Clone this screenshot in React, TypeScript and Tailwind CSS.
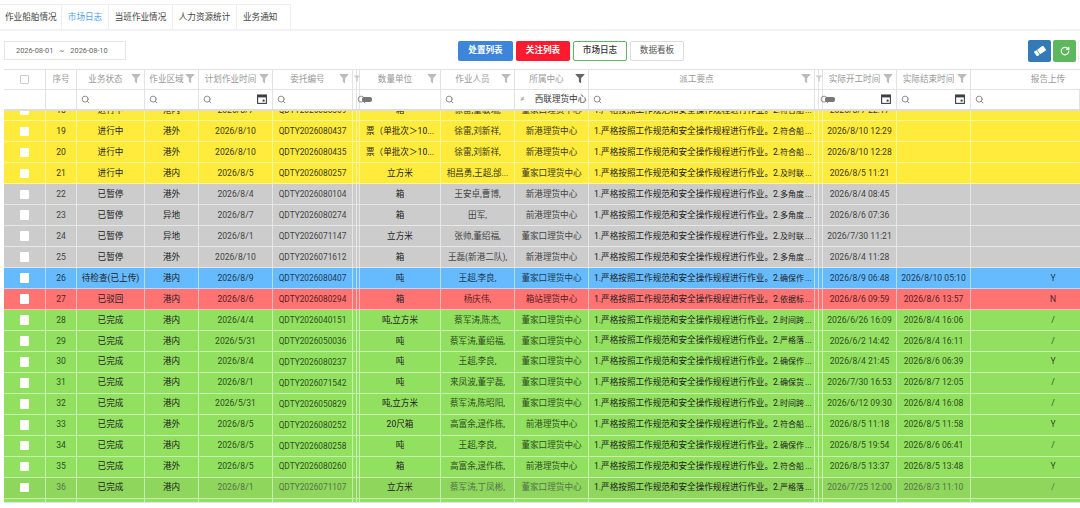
import React from 'react';
import { Search, RotateCw } from 'lucide-react';
import { FaFilter } from 'react-icons/fa';

const GRID =
  'grid grid-cols-[42px_31px_68px_54px_74px_80px_7px_81px_74px_74px_226px_8px_74px_74px_109px]';

const TABS = ['作业船舶情况', '市场日志', '当班作业情况', '人力资源统计', '业务通知'];

const TONES = {
  yellow: 'bg-[#ffeb3b] text-[#3a3a20]',
  gray: 'bg-[#cccccc] text-[#444444]',
  blue: 'bg-[#66bbff] text-[#1f3a52]',
  red: 'bg-[#ff7373] text-[#5a2020]',
  green: 'bg-[#92e05f] text-[#2f4f22]',
  hover: 'bg-[#8ed65c] text-[#55734a]',
};

type Tone = keyof typeof TONES;
type Row = [number, Tone, string, string, string, string, string, string, string, string, string, string, string];

const rows: Row[] = [
  [18, 'yellow', '进行中', '港内', '2026/8/7', 'QDTY2026080369', '箱', '徐雷,董敏瑞,', '董家口理货中心', '符合船', '2026/8/7 22:17', '', ''],
  [19, 'yellow', '进行中', '港外', '2026/8/10', 'QDTY2026080437', '票（单批次＞10...', '徐雷,刘新祥,', '新港理货中心', '符合船', '2026/8/10 12:29', '', ''],
  [20, 'yellow', '进行中', '港外', '2026/8/10', 'QDTY2026080435', '票（单批次＞10...', '徐雷,刘新祥,', '新港理货中心', '符合船', '2026/8/10 12:28', '', ''],
  [21, 'yellow', '进行中', '港内', '2026/8/5', 'QDTY2026080257', '立方米', '相昌勇,王超,邰...', '董家口理货中心', '及时联', '2026/8/5 11:21', '', ''],
  [22, 'gray', '已暂停', '港外', '2026/8/4', 'QDTY2026080104', '箱', '王安卓,曹博,', '新港理货中心', '多角度', '2026/8/4 08:45', '', ''],
  [23, 'gray', '已暂停', '异地', '2026/8/7', 'QDTY2026080274', '箱', '田军,', '前港理货中心', '多角度', '2026/8/6 07:36', '', ''],
  [24, 'gray', '已暂停', '异地', '2026/8/1', 'QDTY2026071147', '立方米', '张帅,董绍福,', '董家口理货中心', '及时联', '2026/7/30 11:21', '', ''],
  [25, 'gray', '已暂停', '港外', '2026/8/10', 'QDTY2026071612', '箱', '王磊(新港二队),', '新港理货中心', '多角度', '2026/8/4 11:28', '', ''],
  [26, 'blue', '待检查(已上传)', '港内', '2026/8/9', 'QDTY2026080407', '吨', '王超,李良,', '董家口理货中心', '确保作', '2026/8/9 06:48', '2026/8/10 05:10', 'Y'],
  [27, 'red', '已驳回', '港内', '2026/8/6', 'QDTY2026080294', '箱', '杨庆伟,', '箱站理货中心', '依据标', '2026/8/6 09:59', '2026/8/6 13:57', 'N'],
  [28, 'green', '已完成', '港内', '2026/4/4', 'QDTY2026040151', '吨,立方米', '蔡军涛,陈杰,', '董家口理货中心', '时间跨', '2026/6/26 16:09', '2026/8/4 16:06', '/'],
  [29, 'green', '已完成', '港内', '2026/5/31', 'QDTY2026050036', '吨', '蔡军涛,董绍福,', '董家口理货中心', '严格落', '2026/6/2 14:42', '2026/8/4 16:11', '/'],
  [30, 'green', '已完成', '港内', '2026/8/4', 'QDTY2026080237', '吨', '王超,李良,', '董家口理货中心', '确保作', '2026/8/4 21:45', '2026/8/6 06:39', 'Y'],
  [31, 'green', '已完成', '港内', '2026/8/1', 'QDTY2026071542', '吨', '来凤波,董学磊,', '董家口理货中心', '确保货', '2026/7/30 16:53', '2026/8/7 12:05', '/'],
  [32, 'green', '已完成', '港内', '2026/5/31', 'QDTY2026050829', '吨,立方米', '蔡军涛,陈昭阳,', '董家口理货中心', '时间跨', '2026/6/12 09:30', '2026/8/4 16:08', '/'],
  [33, 'green', '已完成', '港外', '2026/8/5', 'QDTY2026080252', '20尺箱', '高富余,逯作栋,', '前港理货中心', '符合船', '2026/8/5 11:18', '2026/8/5 11:58', 'Y'],
  [34, 'green', '已完成', '港内', '2026/8/5', 'QDTY2026080258', '吨', '王超,李良,', '董家口理货中心', '确保作', '2026/8/5 19:54', '2026/8/6 06:41', '/'],
  [35, 'green', '已完成', '港外', '2026/8/5', 'QDTY2026080260', '箱', '高富余,逯作栋,', '前港理货中心', '符合船', '2026/8/5 13:37', '2026/8/5 13:48', 'Y'],
  [36, 'hover', '已完成', '港内', '2026/8/1', 'QDTY2026071107', '立方米', '蔡军涛,丁凤彬,', '董家口理货中心', '严格落', '2026/7/25 12:00', '2026/8/3 11:10', '/'],
  [37, 'green', '', '', '', '', '', '', '', '', '', '', ''],
];

function EraserIcon() {
  return (
    <svg viewBox="0 0 12 10" className="h-[10px] w-[12px]">
      <g transform="rotate(-35 6 5)" fill="#ffffff">
        <rect x="4.2" y="2.2" width="7.4" height="5.6" rx="0.6" />
        <rect x="0.4" y="2.2" width="3.2" height="5.6" rx="0.6" />
      </g>
    </svg>
  );
}

function CalendarIcon() {
  return (
    <svg viewBox="0 0 10 10" className="absolute right-[5px] top-[4px] h-[10px] w-[10px]">
      <rect x="0.6" y="1" width="8.8" height="8.4" fill="none" stroke="#3a3f46" strokeWidth="1.1" />
      <rect x="0.6" y="1" width="8.8" height="2.4" fill="#3a3f46" />
      <rect x="5.6" y="5.6" width="2" height="2" fill="#3a3f46" />
    </svg>
  );
}

function HeaderCell({ label, dark, noFilter }: { label: string; dark?: boolean; noFilter?: boolean }) {
  return (
    <div className={`relative flex items-center justify-center border-r border-[#e3e3e3] ${noFilter ? '' : 'pr-[10px]'}`}>
      <span className="truncate">{label}</span>
      {!noFilter && (
        <FaFilter
          className={`absolute right-[3px] top-[4px] h-[9px] w-[10px] ${dark ? 'text-[#666666]' : 'text-[#bbbbbb]'}`}
        />
      )}
    </div>
  );
}

function SearchCell({ calendar, glitch }: { calendar?: boolean; glitch?: boolean }) {
  return (
    <div className="relative flex items-center border-r border-[#e3e3e3] pl-[4px] pb-[1px]">
      {!glitch && <Search className="h-[9px] w-[9px] text-[#888888]" strokeWidth={2.5} />}
      {glitch && (
        <>
          <Search className="absolute -left-[3px] top-[5px] h-[9px] w-[9px] text-[#888888]" strokeWidth={2.5} />
          <span className="absolute left-[2px] top-[7px] h-[5px] w-[10px] rounded-[2px] bg-[#777777]" />
        </>
      )}
      {calendar && <CalendarIcon />}
    </div>
  );
}

function GapCell({ filter }: { filter?: boolean }) {
  return (
    <div className="relative border-r border-[#e3e3e3]">
      <div className="h-full w-[4px] border-r border-[#e3e3e3]" />
      {filter && <FaFilter className="absolute left-[1px] top-[4px] h-[9px] w-[6px] text-[#cccccc]" />}
    </div>
  );
}

function GapRow() {
  return (
    <div className="border-r border-white/50">
      <div className="h-full w-[4px] border-r border-white/50" />
    </div>
  );
}

function DataRow({ row }: { row: Row }) {
  const [no, tone, status, area, plan, code, unit, staff, center, point, start, end, report] = row;
  const cell = 'flex items-center justify-center whitespace-nowrap overflow-hidden border-r border-white/50';
  return (
    <div className={`${GRID} h-[20.96px] border-b border-white/50 text-[8.6px] ${TONES[tone]}`}>
      <div className={cell}>
        <span className="h-[9.5px] w-[9.5px] rounded-[1px] bg-white" />
      </div>
      <div className={cell}>{no}</div>
      <div className={`${cell} text-[#222222]`}>{status}</div>
      <div className={`${cell} text-[#222222]`}>{area}</div>
      <div className={cell}>{plan}</div>
      <div className={`${cell} text-[8.3px]`}>{code}</div>
      <GapRow />
      <div className={`${cell} text-[#222222]`}>{unit}</div>
      <div className={cell}>{staff}</div>
      <div className={cell}>{center}</div>
      <div className="flex items-center overflow-hidden whitespace-nowrap border-r border-white/50 pl-[5px] text-[#222222]">
        {point && (
          <span>
            1.严格按照工作规范和安全操作规程进行作业。2.
            <span className="text-[8px]">{point}</span>
            <span className="pl-[1px]">...</span>
          </span>
        )}
      </div>
      <GapRow />
      <div className={cell}>{start}</div>
      <div className={cell}>{end}</div>
      <div className="flex items-center justify-center pl-[55px]">{report}</div>
    </div>
  );
}

export default function App() {
  return (
    <div
      className="h-[508px] w-[1080px] overflow-hidden bg-white"
      style={{ fontFamily: 'Roboto, "Noto Sans CJK SC", sans-serif' }}
    >
      {/* Tabs */}
      <div className="flex h-[31px] items-end border-b-2 border-[#f1f1f6] pt-[5px]">
        <div className="flex h-[25px] border-t border-r border-[#eeeeee] text-[8.6px] text-[#444444]">
          {TABS.map((tab, i) => (
            <div
              key={tab}
              className={`flex items-center border-r border-[#eeeeee] last:border-r-0 ${
                i === 0 ? 'w-[62px] pl-[5px]' : i === 4 ? 'w-[53px] pl-[6px]' : i === 1 ? 'w-[47px] justify-center text-[#55a3ee]' : 'w-[64px] justify-center'
              }`}
            >
              {tab}
            </div>
          ))}
        </div>
      </div>

      {/* Toolbar */}
      <div className="relative flex h-[38px] items-center justify-center pl-[62px] pt-[1px]">
        <div className="absolute left-[4px] top-[10px] flex h-[19px] w-[122px] items-center gap-[6px] border border-[#e6e6e6] pl-[11px] text-[7.4px] text-[#666666]">
          <span>2026-08-01</span>
          <span>~</span>
          <span>2026-08-10</span>
        </div>
        <div className="flex gap-[3px] text-[8.6px]">
          <button className="h-[20px] w-[55px] rounded-[2px] bg-[#3c85d8] font-bold text-white">处置列表</button>
          <button className="h-[20px] w-[54px] rounded-[2px] bg-[#fb1b2f] font-bold text-white">关注列表</button>
          <button className="h-[20px] w-[54px] rounded-[2px] border border-[#5cb85c] font-medium text-[#333333]">市场日志</button>
          <button className="h-[20px] w-[54px] rounded-[2px] border border-[#dddddd] text-[#555555]">数据看板</button>
        </div>
        <div className="absolute left-[1028px] top-[9px] flex w-[80px] gap-[2px]">
          <button className="flex h-[22px] w-[23px] shrink-0 items-center justify-center rounded-[2px] bg-[#337ab7]">
            <EraserIcon />
          </button>
          <button className="flex h-[22px] w-[23px] shrink-0 items-center justify-center rounded-[2px] bg-[#5cb85c]">
            <RotateCw className="h-[10px] w-[10px] text-white" strokeWidth={3} />
          </button>
          <button className="h-[22px] w-[23px] shrink-0 rounded-[2px] border border-[#eeeeee]" />
        </div>
      </div>

      {/* Table */}
      <div className="ml-[4px] w-[1076px] border-y border-[#e3e3e3]">
        <div className={`${GRID} h-[20px] border-b border-[#e3e3e3] text-[8.6px] text-[#999999]`}>
          <div className="flex items-center justify-center border-r border-[#e3e3e3]">
            <span className="h-[9.5px] w-[9.5px] rounded-[1px] border border-[#cccccc]" />
          </div>
          <HeaderCell label="序号" noFilter />
          <HeaderCell label="业务状态" />
          <HeaderCell label="作业区域" />
          <HeaderCell label="计划作业时间" />
          <HeaderCell label="委托编号" />
          <GapCell filter />
          <HeaderCell label="数量单位" />
          <HeaderCell label="作业人员" />
          <HeaderCell label="所属中心" dark />
          <HeaderCell label="派工要点" />
          <GapCell filter />
          <HeaderCell label="实际开工时间" />
          <HeaderCell label="实际结束时间" />
          <div className="flex items-center justify-center pl-[45px]">报告上传</div>
        </div>
        <div className={`${GRID} h-[21px] border-b-2 border-[#dddddd]`}>
          <div className="border-r border-[#e3e3e3]" />
          <div className="border-r border-[#e3e3e3]" />
          <SearchCell />
          <SearchCell />
          <SearchCell calendar />
          <SearchCell />
          <GapCell />
          <SearchCell glitch />
          <SearchCell />
          <div className="flex items-center gap-[10px] border-r border-[#e3e3e3] pl-[5px] text-[8.6px] text-[#333333]">
            <span className="text-[#888888]">≠</span>
            <span className="whitespace-nowrap">西联理货中心</span>
          </div>
          <SearchCell />
          <GapCell />
          <SearchCell calendar glitch />
          <SearchCell calendar />
          <SearchCell />
        </div>
        <div className="h-[391px] overflow-hidden">
          <div className="-mt-[10.5px]">
            {rows.map((row) => (
              <DataRow key={row[0]} row={row} />
            ))}
          </div>
        </div>
      </div>
    </div>
  );
}
